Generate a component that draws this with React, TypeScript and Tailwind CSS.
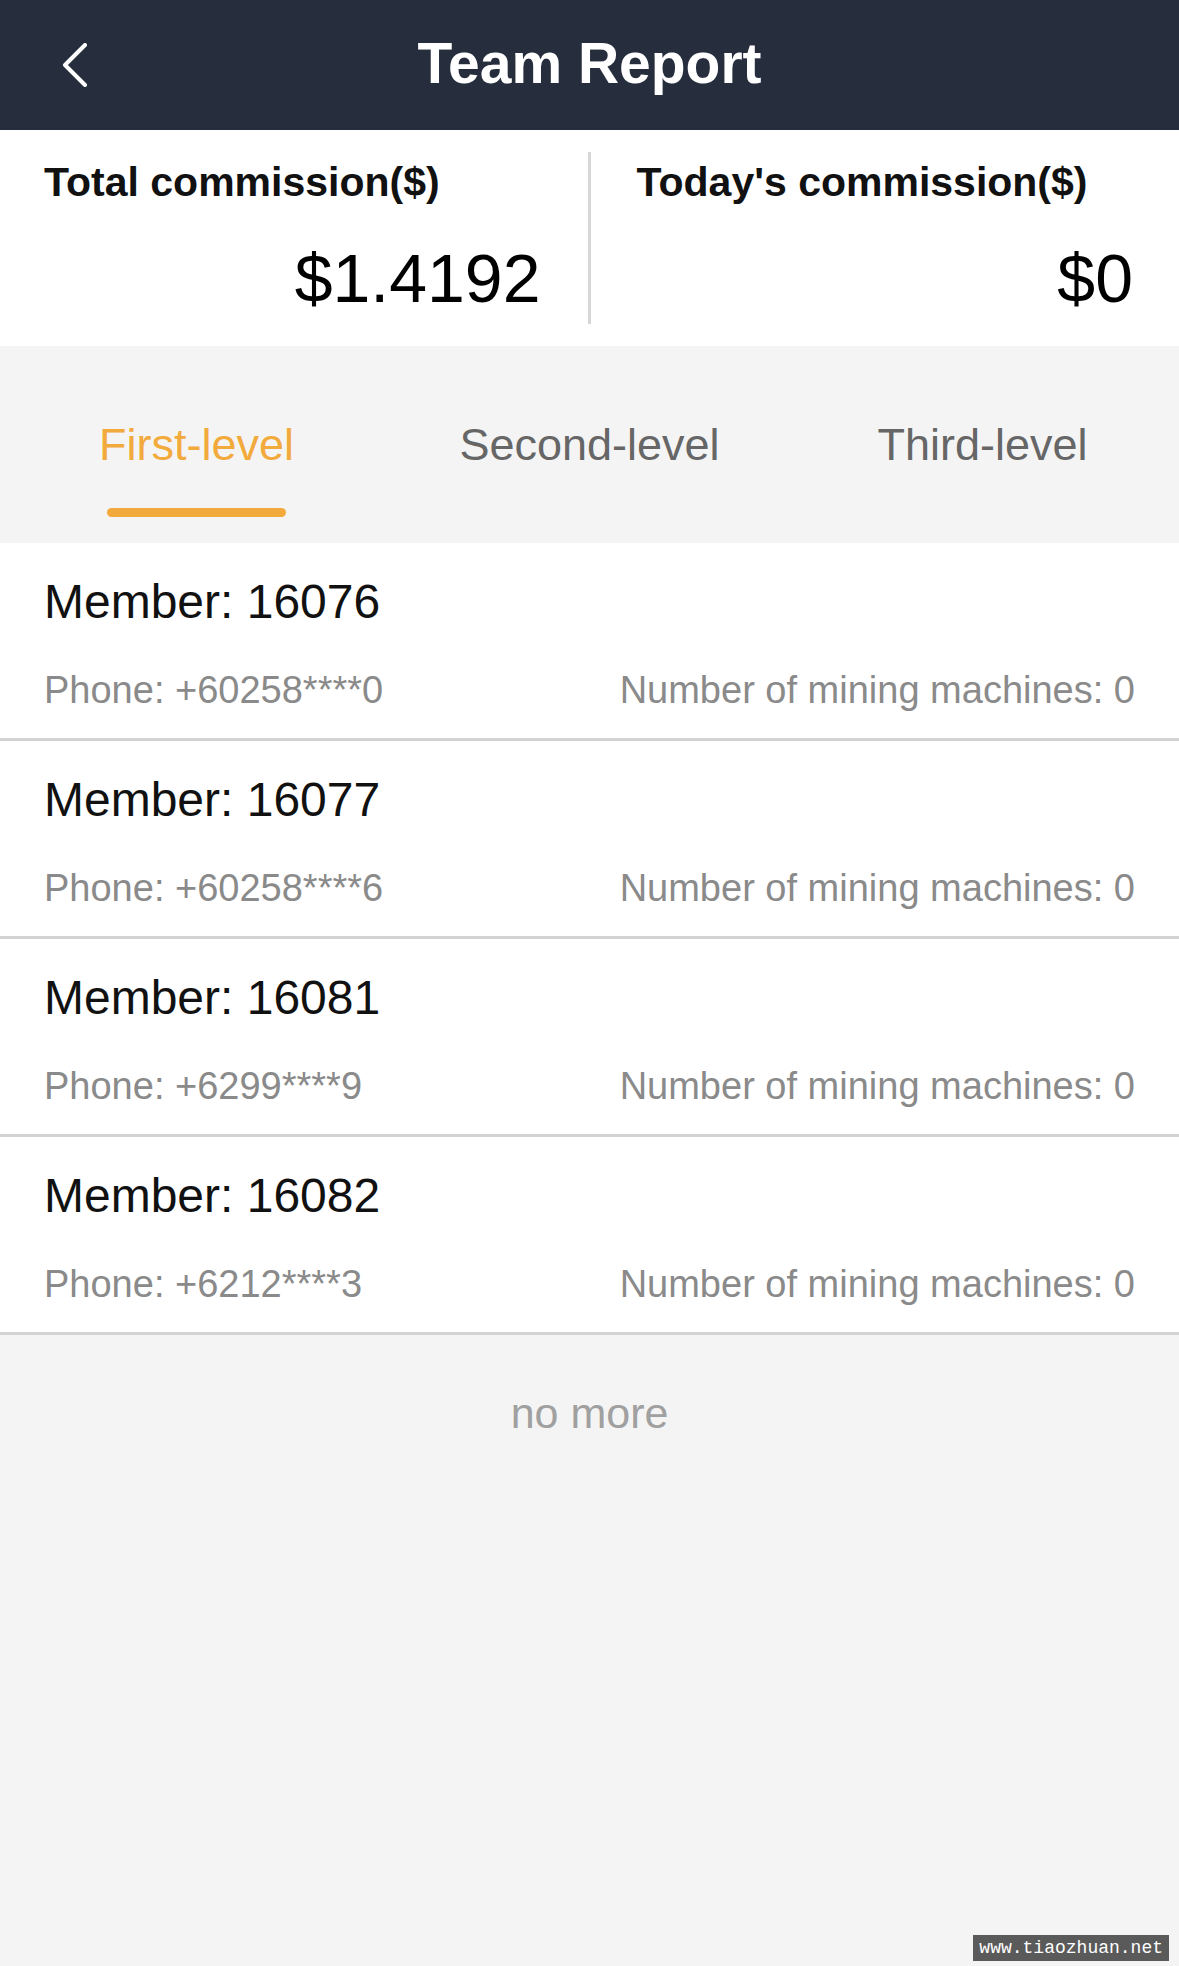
import React from 'react';

interface Member {
  id: string;
  phone: string;
  machines: number;
}

const members: Member[] = [
  { id: '16076', phone: '+60258****0', machines: 0 },
  { id: '16077', phone: '+60258****6', machines: 0 },
  { id: '16081', phone: '+6299****9', machines: 0 },
  { id: '16082', phone: '+6212****3', machines: 0 },
];

const tabs = ['First-level', 'Second-level', 'Third-level'];

const BackIcon: React.FC = () => (
  <svg width="26" height="44" viewBox="0 0 26 44" fill="none">
    <path d="M23 2 L3 22 L23 42" stroke="#ffffff" strokeWidth="4" strokeLinecap="round" strokeLinejoin="round" />
  </svg>
);

const MemberRow: React.FC<{ m: Member }> = ({ m }) => (
  <div className="h-[198px] bg-white border-b-[3px] border-[#d3d3d3] px-[44px] pt-[31px]">
    <div className="text-[48px] leading-[56px] text-[#111111]">Member: {m.id}</div>
    <div className="mt-[38px] flex justify-between text-[38px] leading-[44px] text-[#8a8a8a]">
      <span>Phone: {m.phone}</span>
      <span>Number of mining machines: {m.machines}</span>
    </div>
  </div>
);

const App: React.FC = () => {
  const active = 0;
  return (
    <div className="relative min-h-[1966px] bg-[#f4f4f4] font-['Liberation_Sans',Arial,sans-serif]">
      <header className="h-[130px] bg-[#262e3d] grid grid-cols-[1fr_auto_1fr] items-center">
        <div className="pl-[62px] flex items-center">
          <BackIcon />
        </div>
        <h1 className="text-[57px] leading-none font-bold text-white -mt-[3px]">Team Report</h1>
        <div />
      </header>

      <section className="h-[216px] bg-white flex">
        <div className="flex-1 pl-[44px] pr-[47px] pt-[28px]">
          <div className="text-[41px] leading-[48px] font-bold text-[#111111]">Total commission($)</div>
          <div className="mt-[32px] text-right text-[68px] leading-[80px] text-black">$1.4192</div>
        </div>
        <div className="w-[3px] my-[22px] bg-[#d6d6d6]" />
        <div className="flex-1 pl-[46px] pr-[46px] pt-[28px]">
          <div className="text-[41px] leading-[48px] font-bold text-[#111111]">Today's commission($)</div>
          <div className="mt-[32px] text-right text-[68px] leading-[80px] text-black">$0</div>
        </div>
      </section>

      <nav className="h-[197px] grid grid-cols-3">
        {tabs.map((t, i) => (
          <div key={t} className="flex flex-col items-center pt-[74px]">
            <span className={`text-[45px] leading-[50px] ${i === active ? 'text-[#f2aa3c]' : 'text-[#666666]'}`}>{t}</span>
            <div className={`mt-[38px] w-[179px] h-[9px] rounded-full ${i === active ? 'bg-[#f2aa3c]' : 'bg-transparent'}`} />
          </div>
        ))}
      </nav>

      <div>
        {members.map((m) => (
          <MemberRow key={m.id} m={m} />
        ))}
      </div>

      <div className="pt-[54px] text-center text-[43px] leading-[48px] text-[#a0a0a0]">no more</div>

      <div className="absolute right-[10px] bottom-[5px] h-[26px] px-[6px] flex items-center bg-[#5a5a5a] text-white text-[18px] font-['Liberation_Mono',monospace]">
        www.tiaozhuan.net
      </div>
    </div>
  );
};

export default App;
